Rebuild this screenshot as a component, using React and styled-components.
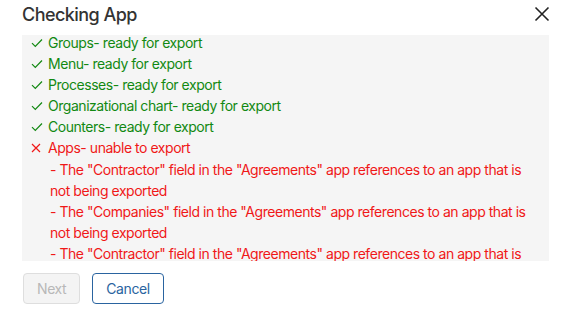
import React from 'react'
import styled, { createGlobalStyle } from 'styled-components'

const GlobalStyle = createGlobalStyle`
  html, body {
    margin: 0;
    background: #fff;
    font-family: Inter, Roboto, "Liberation Sans", sans-serif;
  }
`

const Dialog = styled.div`
  width: 578px;
  height: 309px;
  box-sizing: border-box;
  padding: 0 29px 0 22px;
  display: flex;
  flex-direction: column;
`

const Header = styled.div`
  display: flex;
  align-items: center;
  justify-content: space-between;
  height: 28px;
`

const Title = styled.h1`
  margin: 0;
  font-size: 18px;
  font-weight: 500;
  letter-spacing: -0.55px;
  color: #333;
`

const Close = styled.button`
  border: 0;
  background: none;
  padding: 0;
  margin-right: -1px;
  width: 16px;
  height: 16px;
  display: flex;
  cursor: pointer;
`

const Panel = styled.div`
  margin-top: 7px;
  height: 226px;
  overflow: hidden;
  background: #f5f5f5;
  padding: 0 9px;
  font-size: 14px;
  line-height: 21.1px;
  letter-spacing: -0.46px;
`

/* the list is scrolled a few pixels inside the panel */
const List = styled.div`
  margin-top: -3px;
`

const Row = styled.div`
  display: flex;
  align-items: center;
  color: ${p => (p.$ok ? '#128912' : '#f01818')};
`

const Mark = styled.span`
  width: 17px;
  display: inline-flex;
  align-items: center;
`

const Detail = styled.div`
  color: #f01818;
  padding-left: 19px;
  padding-right: 8px;
`

const Footer = styled.div`
  display: flex;
  gap: 12px;
  margin-top: 12px;
  padding-left: 1px;
`

const Button = styled.button`
  height: 31px;
  padding: 0 13px;
  border-radius: 4px;
  font-family: inherit;
  font-size: 14px;
  letter-spacing: -0.4px;
  background: ${p => (p.$disabled ? '#f4f4f4' : '#fff')};
  color: ${p => (p.$disabled ? '#b8b8b8' : '#2a64a0')};
  border: 1px solid ${p => (p.$disabled ? '#dedede' : '#2a64a0')};
`

const Check = () => (
  <svg width="12" height="10" viewBox="0 0 12 10">
    <path d="M1 5.2 L4.3 8.5 L11 1.5" fill="none" stroke="currentColor" strokeWidth="1.2" />
  </svg>
)

const Cross = () => (
  <svg width="10" height="10" viewBox="0 0 10 10">
    <path d="M1 1 L9 9 M9 1 L1 9" fill="none" stroke="currentColor" strokeWidth="1.2" />
  </svg>
)

const items = [
  'Groups',
  'Menu',
  'Processes',
  'Organizational chart',
  'Counters',
]

const errors = [
  '- The "Contractor" field in the "Agreements" app references to an app that is not being exported',
  '- The "Companies" field in the "Agreements" app references to an app that is not being exported',
  '- The "Contractor" field in the "Agreements" app references to an app that is not being exported',
]

export default function App() {
  return (
    <>
      <GlobalStyle />
      <Dialog>
        <Header>
          <Title>Checking App</Title>
          <Close aria-label="Close">
            <svg width="16" height="16" viewBox="0 0 16 16">
              <path d="M1.5 1.5 L14.5 14.5 M14.5 1.5 L1.5 14.5" stroke="#222" strokeWidth="1.6" />
            </svg>
          </Close>
        </Header>
        <Panel>
          <List>
            {items.map(name => (
              <Row key={name} $ok>
                <Mark><Check /></Mark>
                {name}- ready for export
              </Row>
            ))}
            <Row>
              <Mark><Cross /></Mark>
              Apps- unable to export
            </Row>
            {errors.map((e, i) => (
              <Detail key={i}>{e}</Detail>
            ))}
          </List>
        </Panel>
        <Footer>
          <Button $disabled disabled>Next</Button>
          <Button>Cancel</Button>
        </Footer>
      </Dialog>
    </>
  )
}
